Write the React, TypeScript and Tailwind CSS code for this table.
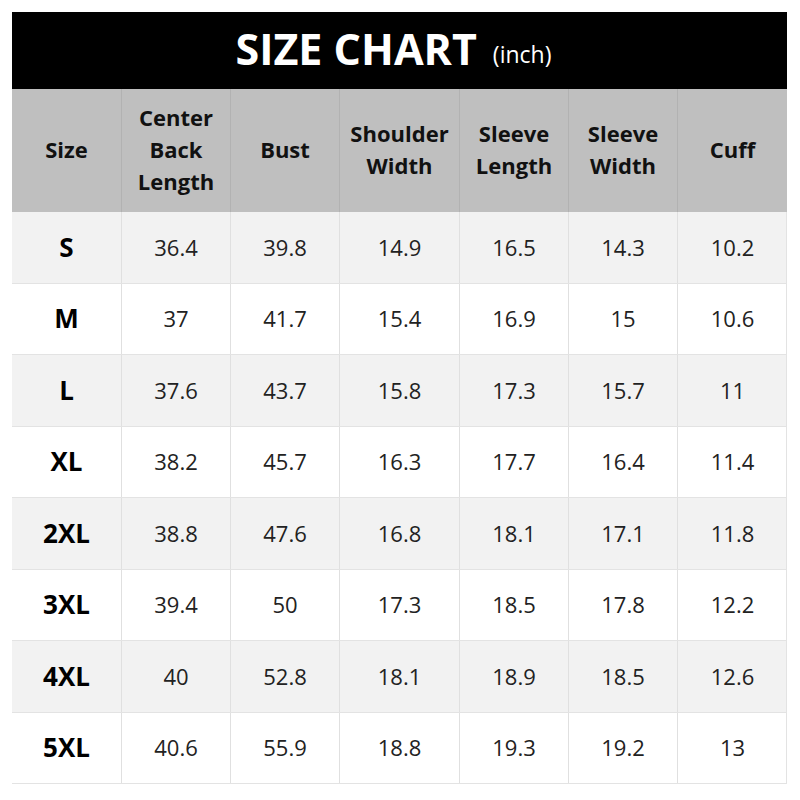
const headers = ['Size', 'Center Back Length', 'Bust', 'Shoulder Width', 'Sleeve Length', 'Sleeve Width', 'Cuff']

const rows = [
  ['S', '36.4', '39.8', '14.9', '16.5', '14.3', '10.2'],
  ['M', '37', '41.7', '15.4', '16.9', '15', '10.6'],
  ['L', '37.6', '43.7', '15.8', '17.3', '15.7', '11'],
  ['XL', '38.2', '45.7', '16.3', '17.7', '16.4', '11.4'],
  ['2XL', '38.8', '47.6', '16.8', '18.1', '17.1', '11.8'],
  ['3XL', '39.4', '50', '17.3', '18.5', '17.8', '12.2'],
  ['4XL', '40', '52.8', '18.1', '18.9', '18.5', '12.6'],
  ['5XL', '40.6', '55.9', '18.8', '19.3', '19.2', '13'],
]

const cols = 'grid grid-cols-[109px_109px_109px_120px_109px_109px_110px]'

export default function App() {
  return (
    <div className="w-[800px] h-[800px] bg-white pt-3 pl-3" style={{ fontFamily: '"Open Sans", "Noto Sans", sans-serif' }}>
      <div className="w-[775px]">
        {/* Title bar */}
        <div className="h-[77px] bg-black text-white flex items-center justify-center gap-4 pr-3">
          <span className="text-[43px] font-bold leading-none -mt-1">SIZE CHART</span>
          <span className="text-[23px] leading-none mt-2">(inch)</span>
        </div>

        {/* Header row */}
        <div className={`${cols} h-[123px] bg-[#bfbfbf]`}>
          {headers.map((h, i) => (
            <div
              key={h}
              className={`flex items-center justify-center text-center text-[22px] font-bold leading-[32px] text-[#111] pb-1 ${i > 0 ? 'border-l border-[#b2b2b2]' : ''}`}
            >
              {h === 'Center Back Length' ? (
                <span>Center<br />Back<br />Length</span>
              ) : (
                <span className="max-w-[118px]">{h}</span>
              )}
            </div>
          ))}
        </div>

        {/* Data rows */}
        {rows.map((r, ri) => (
          <div
            key={r[0]}
            className={`${cols} h-[71.5px] border-b border-r border-[#e3e3e3] ${ri % 2 === 0 ? 'bg-[#f2f2f2]' : 'bg-white'}`}
          >
            {r.map((v, ci) => (
              <div
                key={ci}
                className={`flex items-center justify-center ${ci > 0 ? 'border-l border-[#e0e0e0]' : ''} ${
                  ci === 0 ? 'text-[26px] font-bold text-black' : 'text-[22px] text-[#222]'
                }`}
              >
                {v}
              </div>
            ))}
          </div>
        ))}
      </div>
    </div>
  )
}
